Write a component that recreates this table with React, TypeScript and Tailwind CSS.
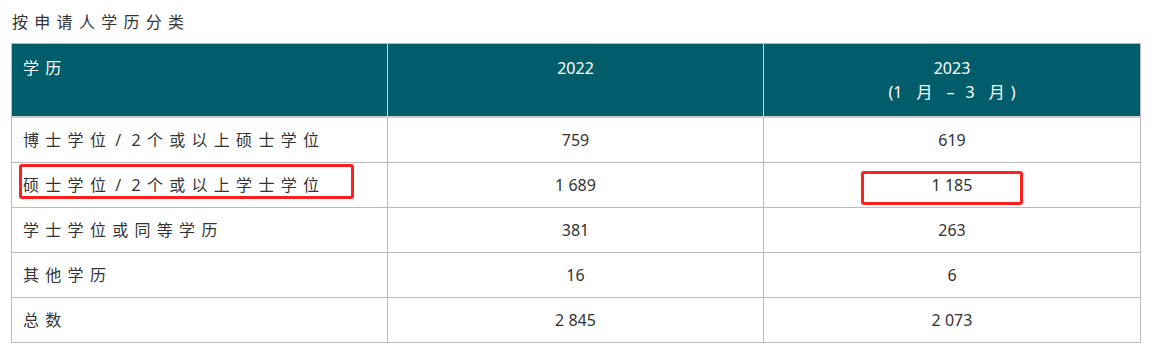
import React from "react";

const rows: [string, string, string][] = [
  ["博士学位/2个或以上硕士学位", "759", "619"],
  ["硕士学位/2个或以上学士学位", "1 689", "1 185"],
  ["学士学位或同等学历", "381", "263"],
  ["其他学历", "16", "6"],
  ["总数", "2 845", "2 073"],
];

function Label({ text }: { text: string }) {
  const parts = text.split("/");
  if (parts.length === 1) return <span className="tracking-[6.3px]">{text}</span>;
  return (
    <span className="tracking-[6.3px]">
      {parts[0]}
      <span className="ml-[3px] mr-[4px]">/</span>
      {parts[1]}
    </span>
  );
}

export default function App() {
  return (
    <div className="relative w-[1162px] h-[352px] bg-white text-[#333] font-['Noto_Sans','Noto_Sans_CJK_SC',sans-serif]">
      <div className="h-[43px] pl-[12px] pt-[10px] text-[16px] leading-[24px] tracking-[6.3px]">
        按申请人学历分类
      </div>
      <table className="ml-[11px] w-[1130px] table-fixed border-separate border-spacing-0 border-t border-l border-[#bbbbbb] text-[16px] leading-[24px]">
        <colgroup>
          <col className="w-[376px]" />
          <col className="w-[376px]" />
          <col className="w-[377px]" />
        </colgroup>
        <thead>
          <tr className="bg-[#005d69] text-white">
            <th className="h-[74px] px-[11px] pt-[12px] align-top text-left font-normal border-r border-b-2 border-r-[#c6d2d4] border-b-[#cccccc]">
              <span className="tracking-[6.3px]">学历</span>
            </th>
            <th className="h-[74px] px-[11px] pt-[12px] align-top text-center font-normal border-r border-b-2 border-r-[#c6d2d4] border-b-[#cccccc]">
              2022
            </th>
            <th className="h-[74px] px-[11px] pt-[12px] align-top text-center font-normal border-r border-b-2 border-r-[#bbbbbb] border-b-[#cccccc]">
              <div>2023</div>
              <div>
                (1<span className="ml-[14px]">月</span>
                <span className="ml-[14px]">–</span>
                <span className="ml-[11px]">3</span>
                <span className="ml-[14px]">月</span>
                <span className="ml-[6px]">)</span>
              </div>
            </th>
          </tr>
        </thead>
        <tbody>
          {rows.map(([a, b, c]) => (
            <tr key={a}>
              <td className="h-[45px] px-[11px] align-middle text-left border-r border-b border-[#bbbbbb]">
                <Label text={a} />
              </td>
              <td className="h-[45px] px-[11px] align-middle text-center border-r border-b border-[#bbbbbb]">
                {b}
              </td>
              <td className="h-[45px] px-[11px] align-middle text-center border-r border-b border-[#bbbbbb]">
                {c}
              </td>
            </tr>
          ))}
        </tbody>
      </table>
      <div className="absolute left-[19px] top-[164px] w-[335px] h-[35px] border-[3px] border-[#ff1f1f] rounded-[3px]" />
      <div className="absolute left-[861px] top-[171px] w-[162px] h-[34px] border-[3px] border-[#ff1f1f] rounded-[3px]" />
    </div>
  );
}
